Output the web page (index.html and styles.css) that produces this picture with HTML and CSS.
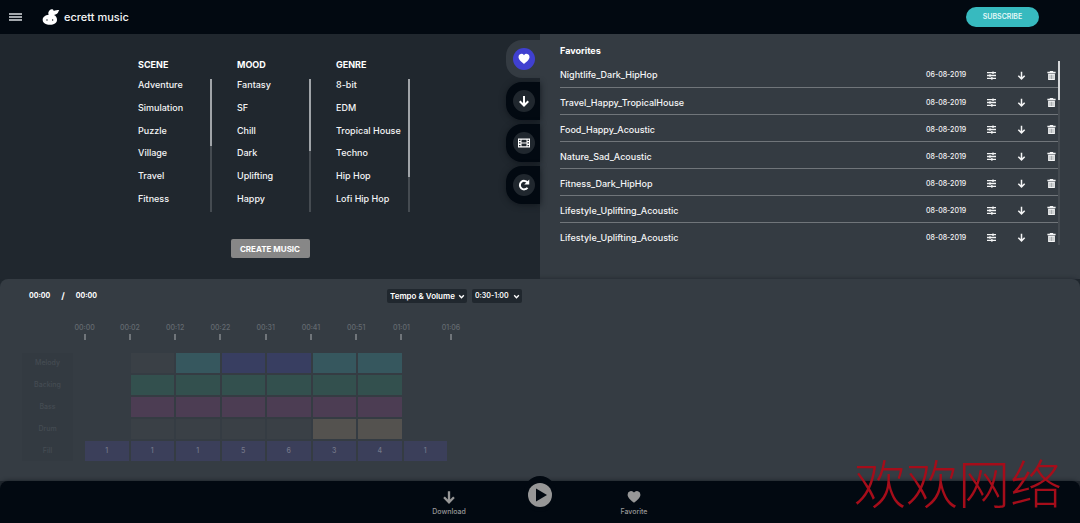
FILE: index.html
```
<!DOCTYPE html>
<html lang="en">
<head>
<meta charset="utf-8">
<title>ecrett music</title>
<link rel="stylesheet" href="styles.css">
</head>
<body>
<svg class="sprite" aria-hidden="true">
  <symbol id="heart" viewBox="0 0 24 24"><path d="M12 22C8 18.500 1 13.500 1 8a6 6 0 0 1 11-3.600A6 6 0 0 1 23 8c0 5.500-7 10.500-11 14z" fill="currentColor"/></symbol>
  <symbol id="down" viewBox="0 0 24 24"><path d="M12 2v18M3.500 12.500 12 21l8.500-8.500" fill="none" stroke="currentColor" stroke-width="4"/></symbol>
  <symbol id="film" viewBox="0 0 24 24"><path fill="currentColor" fill-rule="evenodd" d="M0 3h24v18H0zM7 5.500v5.300h10V5.500zM7 13.200v5.300h10v-5.300zM2 5.500v2.500h3V5.500zM2 10.700v2.500h3v-2.500zM2 16v2.500h3V16zM19 5.500v2.500h3V5.500zM19 10.700v2.500h3v-2.500zM19 16v2.500h3V16z"/></symbol>
  <symbol id="redo" viewBox="0 0 24 24"><path d="M19 17.500A8.500 8.500 0 1 1 19 7" fill="none" stroke="currentColor" stroke-width="4"/><path d="M22.500 1v10h-10z" fill="currentColor"/></symbol>
  <symbol id="sliders" viewBox="0 0 24 24"><path d="M0 4.500h24M0 12h24M0 19.500h24" stroke="currentColor" stroke-width="3.500"/><path d="M16 1v7M8 8.500v7M13 16v7" stroke="currentColor" stroke-width="3.500"/></symbol>
  <symbol id="trash" viewBox="0 0 24 24"><path fill="currentColor" fill-rule="evenodd" d="M8 0h8l1 2h6v4H1V2h6zM3 7h18v17H3zM7.500 10v11h1V10zM11.500 10v11h1V10zM15.500 10v11h1V10z"/></symbol>
  <symbol id="chevron" viewBox="0 0 12 12"><path d="M2 4l4 4 4-4" fill="none" stroke="currentColor" stroke-width="2.400"/></symbol>
</svg>

<header class="topbar">
  <button class="menu" aria-label="Menu"><span></span><span></span><span></span></button>
  <a class="brand" href="#">
    <svg class="logo" viewBox="0 0 54 48" aria-hidden="true"><path fill="#fff" fill-rule="evenodd" d="M2 32c0-8 8-14 18-15-3-6 1-14 9-16 4 0 6 2 6 5 5-3 11-3 17-3-3 3-2 8-7 11-3 2-6 3-9 4 6 3 9 8 9 14 0 10-9 15-21 15S2 42 2 32zm13-1a2 2 0 1 0 0 4 2 2 0 0 0 0-4zm17 0a2 2 0 1 0 0 4 2 2 0 0 0 0-4z"/></svg>
    <span>ecrett music</span>
  </a>
  <button class="subscribe">SUBSCRIBE</button>
</header>

<main class="panels">
  <section class="composer">
    <div class="pickers">
      <div class="picker">
        <h2>SCENE</h2>
        <ul><li>Adventure</li><li>Simulation</li><li>Puzzle</li><li>Village</li><li>Travel</li><li>Fitness</li></ul>
        <div class="track"><div class="thumb half"></div></div>
      </div>
      <div class="picker">
        <h2>MOOD</h2>
        <ul><li>Fantasy</li><li>SF</li><li>Chill</li><li>Dark</li><li>Uplifting</li><li>Happy</li></ul>
        <div class="track"><div class="thumb medium"></div></div>
      </div>
      <div class="picker">
        <h2>GENRE</h2>
        <ul><li>8-bit</li><li>EDM</li><li>Tropical House</li><li>Techno</li><li>Hip Hop</li><li>Lofi Hip Hop</li></ul>
        <div class="track"><div class="thumb long"></div></div>
      </div>
    </div>
    <button class="create">CREATE MUSIC</button>
    <nav class="tabs">
      <button class="tab active" aria-label="Favorites"><span><svg><use href="#heart"/></svg></span></button>
      <button class="tab" aria-label="Downloads"><span><svg><use href="#down"/></svg></span></button>
      <button class="tab" aria-label="Video"><span><svg><use href="#film"/></svg></span></button>
      <button class="tab" aria-label="History"><span><svg><use href="#redo"/></svg></span></button>
    </nav>
  </section>

  <section class="favorites">
    <h2>Favorites</h2>
    <div class="list">
      <table>
        <tbody>
          <tr><td>Nightlife_Dark_HipHop</td><td class="date">06-08-2019</td><td class="act"><button aria-label="Edit"><svg><use href="#sliders"/></svg></button></td><td class="act"><button aria-label="Download"><svg><use href="#down"/></svg></button></td><td class="act last"><button aria-label="Delete"><svg><use href="#trash"/></svg></button></td></tr>
          <tr><td>Travel_Happy_TropicalHouse</td><td class="date">08-08-2019</td><td class="act"><button aria-label="Edit"><svg><use href="#sliders"/></svg></button></td><td class="act"><button aria-label="Download"><svg><use href="#down"/></svg></button></td><td class="act last"><button aria-label="Delete"><svg><use href="#trash"/></svg></button></td></tr>
          <tr><td>Food_Happy_Acoustic</td><td class="date">08-08-2019</td><td class="act"><button aria-label="Edit"><svg><use href="#sliders"/></svg></button></td><td class="act"><button aria-label="Download"><svg><use href="#down"/></svg></button></td><td class="act last"><button aria-label="Delete"><svg><use href="#trash"/></svg></button></td></tr>
          <tr><td>Nature_Sad_Acoustic</td><td class="date">08-08-2019</td><td class="act"><button aria-label="Edit"><svg><use href="#sliders"/></svg></button></td><td class="act"><button aria-label="Download"><svg><use href="#down"/></svg></button></td><td class="act last"><button aria-label="Delete"><svg><use href="#trash"/></svg></button></td></tr>
          <tr><td>Fitness_Dark_HipHop</td><td class="date">08-08-2019</td><td class="act"><button aria-label="Edit"><svg><use href="#sliders"/></svg></button></td><td class="act"><button aria-label="Download"><svg><use href="#down"/></svg></button></td><td class="act last"><button aria-label="Delete"><svg><use href="#trash"/></svg></button></td></tr>
          <tr><td>Lifestyle_Uplifting_Acoustic</td><td class="date">08-08-2019</td><td class="act"><button aria-label="Edit"><svg><use href="#sliders"/></svg></button></td><td class="act"><button aria-label="Download"><svg><use href="#down"/></svg></button></td><td class="act last"><button aria-label="Delete"><svg><use href="#trash"/></svg></button></td></tr>
          <tr><td>Lifestyle_Uplifting_Acoustic</td><td class="date">08-08-2019</td><td class="act"><button aria-label="Edit"><svg><use href="#sliders"/></svg></button></td><td class="act"><button aria-label="Download"><svg><use href="#down"/></svg></button></td><td class="act last"><button aria-label="Delete"><svg><use href="#trash"/></svg></button></td></tr>
        </tbody>
      </table>
      <div class="track"><div class="thumb short"></div></div>
    </div>
  </section>
</main>

<section class="editor">
  <div class="controls">
    <div class="clock"><span>00:00</span><span class="slash">/</span><span>00:00</span></div>
    <div class="selects">
      <label class="drop wide"><select aria-label="Edit mode"><option>Tempo &amp; Volume</option></select><svg><use href="#chevron"/></svg></label>
      <label class="drop"><select aria-label="Length"><option>0:30-1:00</option></select><svg><use href="#chevron"/></svg></label>
    </div>
  </div>
  <div class="ruler"><span>00:00</span><span>00:02</span><span>00:12</span><span>00:22</span><span>00:31</span><span>00:41</span><span>00:51</span><span>01:01</span><span>01:06</span></div>
  <div class="timeline">
    <div class="names"><span>Melody</span><span>Backing</span><span>Bass</span><span>Drum</span><span>Fill</span></div>
    <div class="cells">
      <i></i><i class="off"></i><i class="teal"></i><i class="blue"></i><i class="blue"></i><i class="teal"></i><i class="teal"></i><i></i>
      <i></i><i class="green"></i><i class="green"></i><i class="green"></i><i class="green"></i><i class="green"></i><i class="green"></i><i></i>
      <i></i><i class="plum"></i><i class="plum"></i><i class="plum"></i><i class="plum"></i><i class="plum"></i><i class="plum"></i><i></i>
      <i></i><i class="off"></i><i class="off"></i><i class="off"></i><i class="off"></i><i class="sand"></i><i class="sand"></i><i></i>
      <i class="fill">1</i><i class="fill">1</i><i class="fill">1</i><i class="fill">5</i><i class="fill">6</i><i class="fill">3</i><i class="fill">4</i><i class="fill">1</i>
    </div>
  </div>
</section>

<footer class="player">
  <button class="action"><svg><use href="#down"/></svg>Download</button>
  <button class="play" aria-label="Play"><svg viewBox="0 0 24 24"><circle cx="12" cy="12" r="12" fill="#979797"/><path d="M8 5.500v13L19 12z" fill="#020911"/></svg></button>
  <button class="action"><svg><use href="#heart"/></svg>Favorite</button>
</footer>
<div class="watermark" lang="zh">欢欢网络</div>
</body>
</html>
```
FILE: styles.css
```
* { box-sizing: border-box; }
body {
  margin: 0;
  min-height: 100vh;
  display: grid;
  grid-template-rows: auto auto 1fr auto;
  position: relative;
  overflow: hidden;
  background: #20272e;
  color: #f4f5f6;
  font: 500 9px/14px Inter, "Open Sans", sans-serif;
}
button { border: 0; padding: 0; background: none; color: inherit; font: inherit; }
h2 { margin: 0; font-size: 9px; line-height: 14px; font-weight: 700; color: #fff; }
ul { margin: 0; padding: 0; list-style: none; }
svg { display: block; }
.sprite { position: absolute; width: 0; height: 0; }

.topbar { display: flex; align-items: center; height: 34px; padding: 0 41px 0 9px; background: #020911; }
.menu { display: grid; gap: 1px; width: 13px; }
.menu span { height: 2px; background: #a3a8ad; }
.brand { display: flex; align-items: center; gap: 4px; margin-left: 20px; color: #f4f5f6; text-decoration: none; font-size: 11px; }
.logo { width: 18px; height: 16px; }
.subscribe { margin-left: auto; width: 73px; height: 20px; border-radius: 10px; background: #37babf; color: #e3f8f8; font-size: 7px; font-weight: 600; }

.panels { display: grid; grid-template-columns: 1fr 1fr; }
.composer { position: relative; display: flex; flex-direction: column; align-items: center; padding: 24px 0 20px; background: #20272e; }
.pickers { display: grid; grid-template-columns: repeat(3, 74px); gap: 25px; padding-left: 8px; }
.picker { display: grid; grid-template-columns: 1fr 2px; }
.picker h2 { grid-column: 1 / -1; }
.picker ul { display: grid; grid-template-rows: repeat(6, 1fr); align-items: center; height: 136px; margin-top: 2px; white-space: nowrap; }
.track { width: 2px; background: #454b51; }
.picker .track { height: 133px; margin-top: 7px; }
.thumb { background: #a0a4a8; }
.half { height: 50%; }
.medium { height: 54%; }
.long { height: 74%; }
.short { height: 21%; background: #d5d7d9; }
.create { width: 79px; height: 19px; margin-top: 27px; border-radius: 2px; background: #878787; color: #fff; font-size: 8px; font-weight: 700; }

.tabs { position: absolute; top: 6px; right: 0; display: grid; gap: 4px; }
.tab { display: grid; place-items: center; width: 34px; height: 38px; border-radius: 16px 0 0 16px; background: #020911; box-shadow: 0 1px 6px #12181e; }
.tab span { display: grid; place-items: center; width: 22px; height: 22px; margin-left: 2px; border-radius: 50%; background: #20272e; color: #fff; }
.tab svg { width: 12px; height: 12px; }
.tab.active { background: #343b42; box-shadow: none; }
.tab.active span { background: #4040d0; }

.favorites { padding: 10px 20px 30px; background: #343b42; }
.list { display: grid; grid-template-columns: 1fr 2px; margin-top: 2px; }
table { width: 100%; border-collapse: collapse; table-layout: fixed; }
td { height: 27px; padding: 4px 0 0; border-bottom: 1px solid #70757a; }
tr:last-child td { border-bottom: 0; }
td.date { width: 50px; font-size: 7px; }
td.act { width: 30px; }
td.last { width: 22px; }
td.act button { display: grid; place-items: center; width: 30px; }
td.last button { margin-right: -8px; }
td.act svg { width: 9px; height: 9px; }
.list .track { height: 184px; margin-top: 1px; }

.editor { padding: 9px 28px 19px; border-radius: 8px 8px 0 0; background: #353c43; box-shadow: 0 0 4px #20272e; }
.controls { display: grid; grid-template-columns: 494px; height: 16px; align-items: center; font-size: 8px; font-weight: 600; color: #fff; }
.clock { grid-column: 1; grid-row: 1; display: flex; gap: 11px; font-size: 7px; font-weight: 700; padding-left: 1px; }
.slash { font-size: 9px; }
.selects { grid-column: 1; grid-row: 1; justify-self: end; display: flex; gap: 5px; }
.drop { position: relative; width: 50px; font-size: 7px; }
.drop.wide { width: 80px; font-size: 8px; }
.drop select { appearance: none; width: 100%; height: 14px; border: 0; border-radius: 2px; padding: 0 3px; background: #20272e; color: #fff; font: inherit; }
.drop svg { position: absolute; right: 2px; top: 4px; width: 7px; height: 7px; pointer-events: none; }
.ruler { display: grid; grid-template-columns: repeat(8, 1fr) 54px; width: 416px; margin: 19px 0 0 34px; color: #646a70; font-size: 7px; line-height: 10px; text-align: center; }
.ruler span::after { content: ""; display: block; width: 2px; height: 6px; margin: 1px auto 0; background: #70757a; }
.timeline { display: grid; grid-template-columns: 51px 362px; gap: 12px; margin: 13px 0 0 -6px; }
.names, .cells { display: grid; grid-auto-rows: 20px; gap: 2px; }
.names { background: #333a41; color: #454c53; font-size: 7px; justify-items: center; align-items: center; }
.cells { grid-template-columns: repeat(8, 1fr); }
.cells i { display: grid; place-items: center; font-size: 7px; font-style: normal; color: #737789; }
.off { background: #3a4046; }
.teal { background: #36575e; }
.blue { background: #383e61; }
.green { background: #33504e; }
.plum { background: #4c3d53; }
.sand { background: #54524f; }
.fill { background: #3b3f5a; }

.player { display: grid; grid-template-columns: 60px 32px 66px; justify-content: center; column-gap: 45px; height: 42px; padding-left: 6px; border-radius: 8px 8px 0 0; background: #020911; box-shadow: 0 0 4px #181e24; }
.action { display: grid; align-content: start; justify-items: center; gap: 1px; padding-top: 9px; color: #979797; font-size: 7px; line-height: 13px; }
.action svg { width: 14px; height: 14px; }
.play { display: grid; place-items: center; width: 32px; height: 36px; margin-top: -5px; padding-top: 2px; border-radius: 16px; background: #020911; }
.play svg { width: 24px; height: 24px; }

.watermark { position: absolute; right: 18px; bottom: 11px; color: #a50d1a; font: 300 52px/60px "Noto Sans CJK SC", sans-serif; pointer-events: none; }
```
